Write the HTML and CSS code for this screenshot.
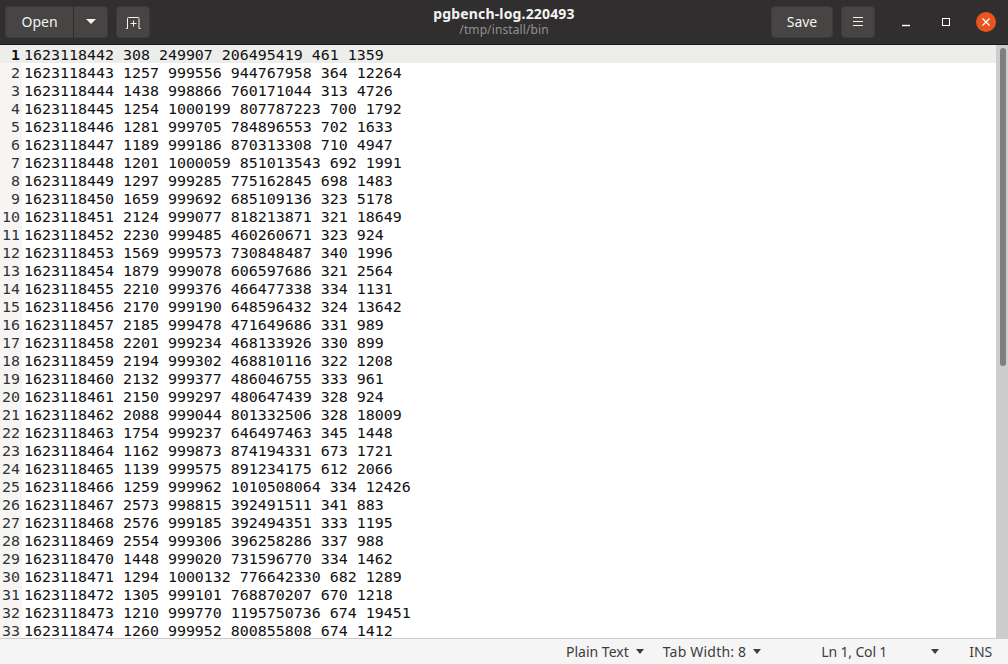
FILE: index.html
```html
<!DOCTYPE html>
<html lang="en">
<head>
<meta charset="utf-8">
<title>pgbench-log.220493</title>
<link rel="stylesheet" href="styles.css">
</head>
<body>
<div class="window">
  <header class="titlebar">
    <div class="tb-left">
      <div class="btn-group">
        <button class="btn btn-open">Open</button>
        <button class="btn btn-arrow"><span class="caret caret-white"></span></button>
      </div>
      <button class="btn btn-icon">
        <svg width="16" height="14" viewBox="0 0 16 14"><path d="M1 13.5 H2.5 V3.5 Q2.5 2.5 3.5 2.5 H13 Q14 2.5 14 3.5 V13.5 H15.5" fill="none" stroke="#f3f3f3" stroke-width="1"/><path d="M8.5 5.5 V11.5 M5.5 8.5 H11.5" stroke="#f3f3f3" stroke-width="1" fill="none"/></svg>
      </button>
    </div>
    <div class="title">
      <div class="title-main">pgbench-log.220493</div>
      <div class="title-sub">/tmp/install/bin</div>
    </div>
    <div class="tb-right">
      <button class="btn btn-save">Save</button>
      <button class="btn btn-icon btn-menu">
        <svg width="12" height="12" viewBox="0 0 12 12"><path d="M1 1.5 H11 M1 5.5 H11 M1 9.5 H11" stroke="#f3f3f3" stroke-width="1" fill="none"/></svg>
      </button>
      <div class="wm">
        <svg class="wm-min" width="10" height="10" viewBox="0 0 10 10"><path d="M1 8.5 H9" stroke="#fff" stroke-width="1.4"/></svg>
        <svg class="wm-max" width="10" height="10" viewBox="0 0 10 10"><rect x="1.5" y="1.5" width="7" height="7" fill="none" stroke="#fff" stroke-width="1"/></svg>
        <div class="wm-close"><svg width="10" height="10" viewBox="0 0 10 10"><path d="M1.5 1.5 L8.5 8.5 M8.5 1.5 L1.5 8.5" stroke="#fff" stroke-width="1.3"/></svg></div>
      </div>
    </div>
  </header>
  <main class="editor">
    <div class="gutter" id="gutter"><div class="num cur">1</div><div class="num">2</div><div class="num">3</div><div class="num">4</div><div class="num">5</div><div class="num">6</div><div class="num">7</div><div class="num">8</div><div class="num">9</div><div class="num">10</div><div class="num">11</div><div class="num">12</div><div class="num">13</div><div class="num">14</div><div class="num">15</div><div class="num">16</div><div class="num">17</div><div class="num">18</div><div class="num">19</div><div class="num">20</div><div class="num">21</div><div class="num">22</div><div class="num">23</div><div class="num">24</div><div class="num">25</div><div class="num">26</div><div class="num">27</div><div class="num">28</div><div class="num">29</div><div class="num">30</div><div class="num">31</div><div class="num">32</div><div class="num">33</div></div>
    <div class="text">
      <div class="line cur">1623118442 308 249907 206495419 461 1359</div>
      <div class="line">1623118443 1257 999556 944767958 364 12264</div>
      <div class="line">1623118444 1438 998866 760171044 313 4726</div>
      <div class="line">1623118445 1254 1000199 807787223 700 1792</div>
      <div class="line">1623118446 1281 999705 784896553 702 1633</div>
      <div class="line">1623118447 1189 999186 870313308 710 4947</div>
      <div class="line">1623118448 1201 1000059 851013543 692 1991</div>
      <div class="line">1623118449 1297 999285 775162845 698 1483</div>
      <div class="line">1623118450 1659 999692 685109136 323 5178</div>
      <div class="line">1623118451 2124 999077 818213871 321 18649</div>
      <div class="line">1623118452 2230 999485 460260671 323 924</div>
      <div class="line">1623118453 1569 999573 730848487 340 1996</div>
      <div class="line">1623118454 1879 999078 606597686 321 2564</div>
      <div class="line">1623118455 2210 999376 466477338 334 1131</div>
      <div class="line">1623118456 2170 999190 648596432 324 13642</div>
      <div class="line">1623118457 2185 999478 471649686 331 989</div>
      <div class="line">1623118458 2201 999234 468133926 330 899</div>
      <div class="line">1623118459 2194 999302 468810116 322 1208</div>
      <div class="line">1623118460 2132 999377 486046755 333 961</div>
      <div class="line">1623118461 2150 999297 480647439 328 924</div>
      <div class="line">1623118462 2088 999044 801332506 328 18009</div>
      <div class="line">1623118463 1754 999237 646497463 345 1448</div>
      <div class="line">1623118464 1162 999873 874194331 673 1721</div>
      <div class="line">1623118465 1139 999575 891234175 612 2066</div>
      <div class="line">1623118466 1259 999962 1010508064 334 12426</div>
      <div class="line">1623118467 2573 998815 392491511 341 883</div>
      <div class="line">1623118468 2576 999185 392494351 333 1195</div>
      <div class="line">1623118469 2554 999306 396258286 337 988</div>
      <div class="line">1623118470 1448 999020 731596770 334 1462</div>
      <div class="line">1623118471 1294 1000132 776642330 682 1289</div>
      <div class="line">1623118472 1305 999101 768870207 670 1218</div>
      <div class="line">1623118473 1210 999770 1195750736 674 19451</div>
      <div class="line">1623118474 1260 999952 800855808 674 1412</div>
    </div>
    <div class="scrollbar"><div class="thumb"></div></div>
  </main>
  <footer class="statusbar">
    <div class="st st-lang">Plain Text<span class="caret"></span></div>
    <div class="st st-tab">Tab Width: 8<span class="caret"></span></div>
    <div class="st st-pos">Ln 1, Col 1</div>
    <span class="caret st-poscaret"></span>
    <div class="st st-ins">INS</div>
  </footer>
</div>
</body>
</html>
```

FILE: styles.css
```css
* { box-sizing: border-box; }
html, body { margin: 0; padding: 0; height: 100%; overflow: hidden; }
.window { width: 1008px; height: 664px; display: flex; flex-direction: column; background: #fff; font-family: "Noto Sans", sans-serif; }

.titlebar { height: 45px; flex: none; display: flex; align-items: center; justify-content: space-between; background: #302e2e; border-bottom: 1px solid #191818; position: relative; padding: 0 0 1px 5px; }
.tb-left, .tb-right { display: flex; align-items: center; }
.tb-left { gap: 8px; }
.btn { height: 32px; border: 1px solid #3c3b39; border-radius: 4px; background: #464543; color: #f3f3f3; font-family: "Noto Sans", sans-serif; font-size: 14px; padding: 0; display: flex; align-items: center; justify-content: center; }
.btn-group { display: flex; }
.btn-open { width: 69px; border-radius: 4px 0 0 4px; border-right: 1px solid #2c2a2a; }
.btn-arrow { width: 34px; border-radius: 0 4px 4px 0; border-left: 0; }
.btn-icon { width: 34px; }
.btn-save { width: 62px; }
.btn-menu { margin-left: 8px; }

.caret { display: inline-block; width: 0; height: 0; border-left: 4.5px solid transparent; border-right: 4.5px solid transparent; border-top: 5px solid #3d3d3d; }
.caret-white { border-left-width: 5px; border-right-width: 5px; border-top-color: #f3f3f3; }

.title { position: absolute; left: 0; right: 0; top: 6px; text-align: center; pointer-events: none; line-height: 16px; }
.title-main { color: #f3f3f3; font-size: 14px; font-weight: 700; height: 17px; letter-spacing: 0.15px; }
.title-sub { color: #92918f; font-size: 12px; height: 16px; margin-top: -1px; letter-spacing: 0.1px; }

.wm { display: flex; align-items: center; margin-left: 26px; padding-right: 12px; }
.wm-min { margin-right: 30px; }
.wm-max { margin-right: 25px; }
.wm-close { width: 20px; height: 20px; border-radius: 50%; background: #e9541f; display: flex; align-items: center; justify-content: center; }

.editor { flex: 1; min-height: 0; display: flex; overflow: hidden; background: #fff; position: relative; font-family: "DejaVu Sans Mono", monospace; font-size: 14.95px; line-height: 20px; color: #111; }
.gutter { width: 22px; flex: none; background: #f6f5f4; text-align: right; padding-right: 2px; position: relative; z-index: 1; }
.num { height: 18px; color: #2e3436; }
.num.cur { font-weight: 700; color: #111; background: #ededeb; margin-right: -2px; padding-right: 2px; }
.text { flex: 1; min-width: 0; }
.line { height: 18px; padding-left: 2px; white-space: pre; }
.line.cur { background: #ededeb; }
.scrollbar { width: 12px; flex: none; background: #cdcdcd; padding: 3px 2px 0 4px; }
.thumb { width: 6px; height: 318px; border-radius: 3px; background: #7e7e7e; }

.statusbar { height: 26px; flex: none; display: flex; align-items: center; background: #f5f5f5; border-top: 1px solid #cfcdc9; color: #3d3d3d; font-size: 14px; position: relative; }
.st { display: flex; align-items: center; white-space: nowrap; }
.st .caret { margin-left: 7px; }
.st-lang { margin-left: 566px; }
.st-tab { margin-left: 19px; letter-spacing: 0.2px; }
.st-pos { margin-left: 60px; letter-spacing: -0.15px; }
.st-poscaret { margin-left: 44px; }
.st-ins { margin-left: 30px; }
```
